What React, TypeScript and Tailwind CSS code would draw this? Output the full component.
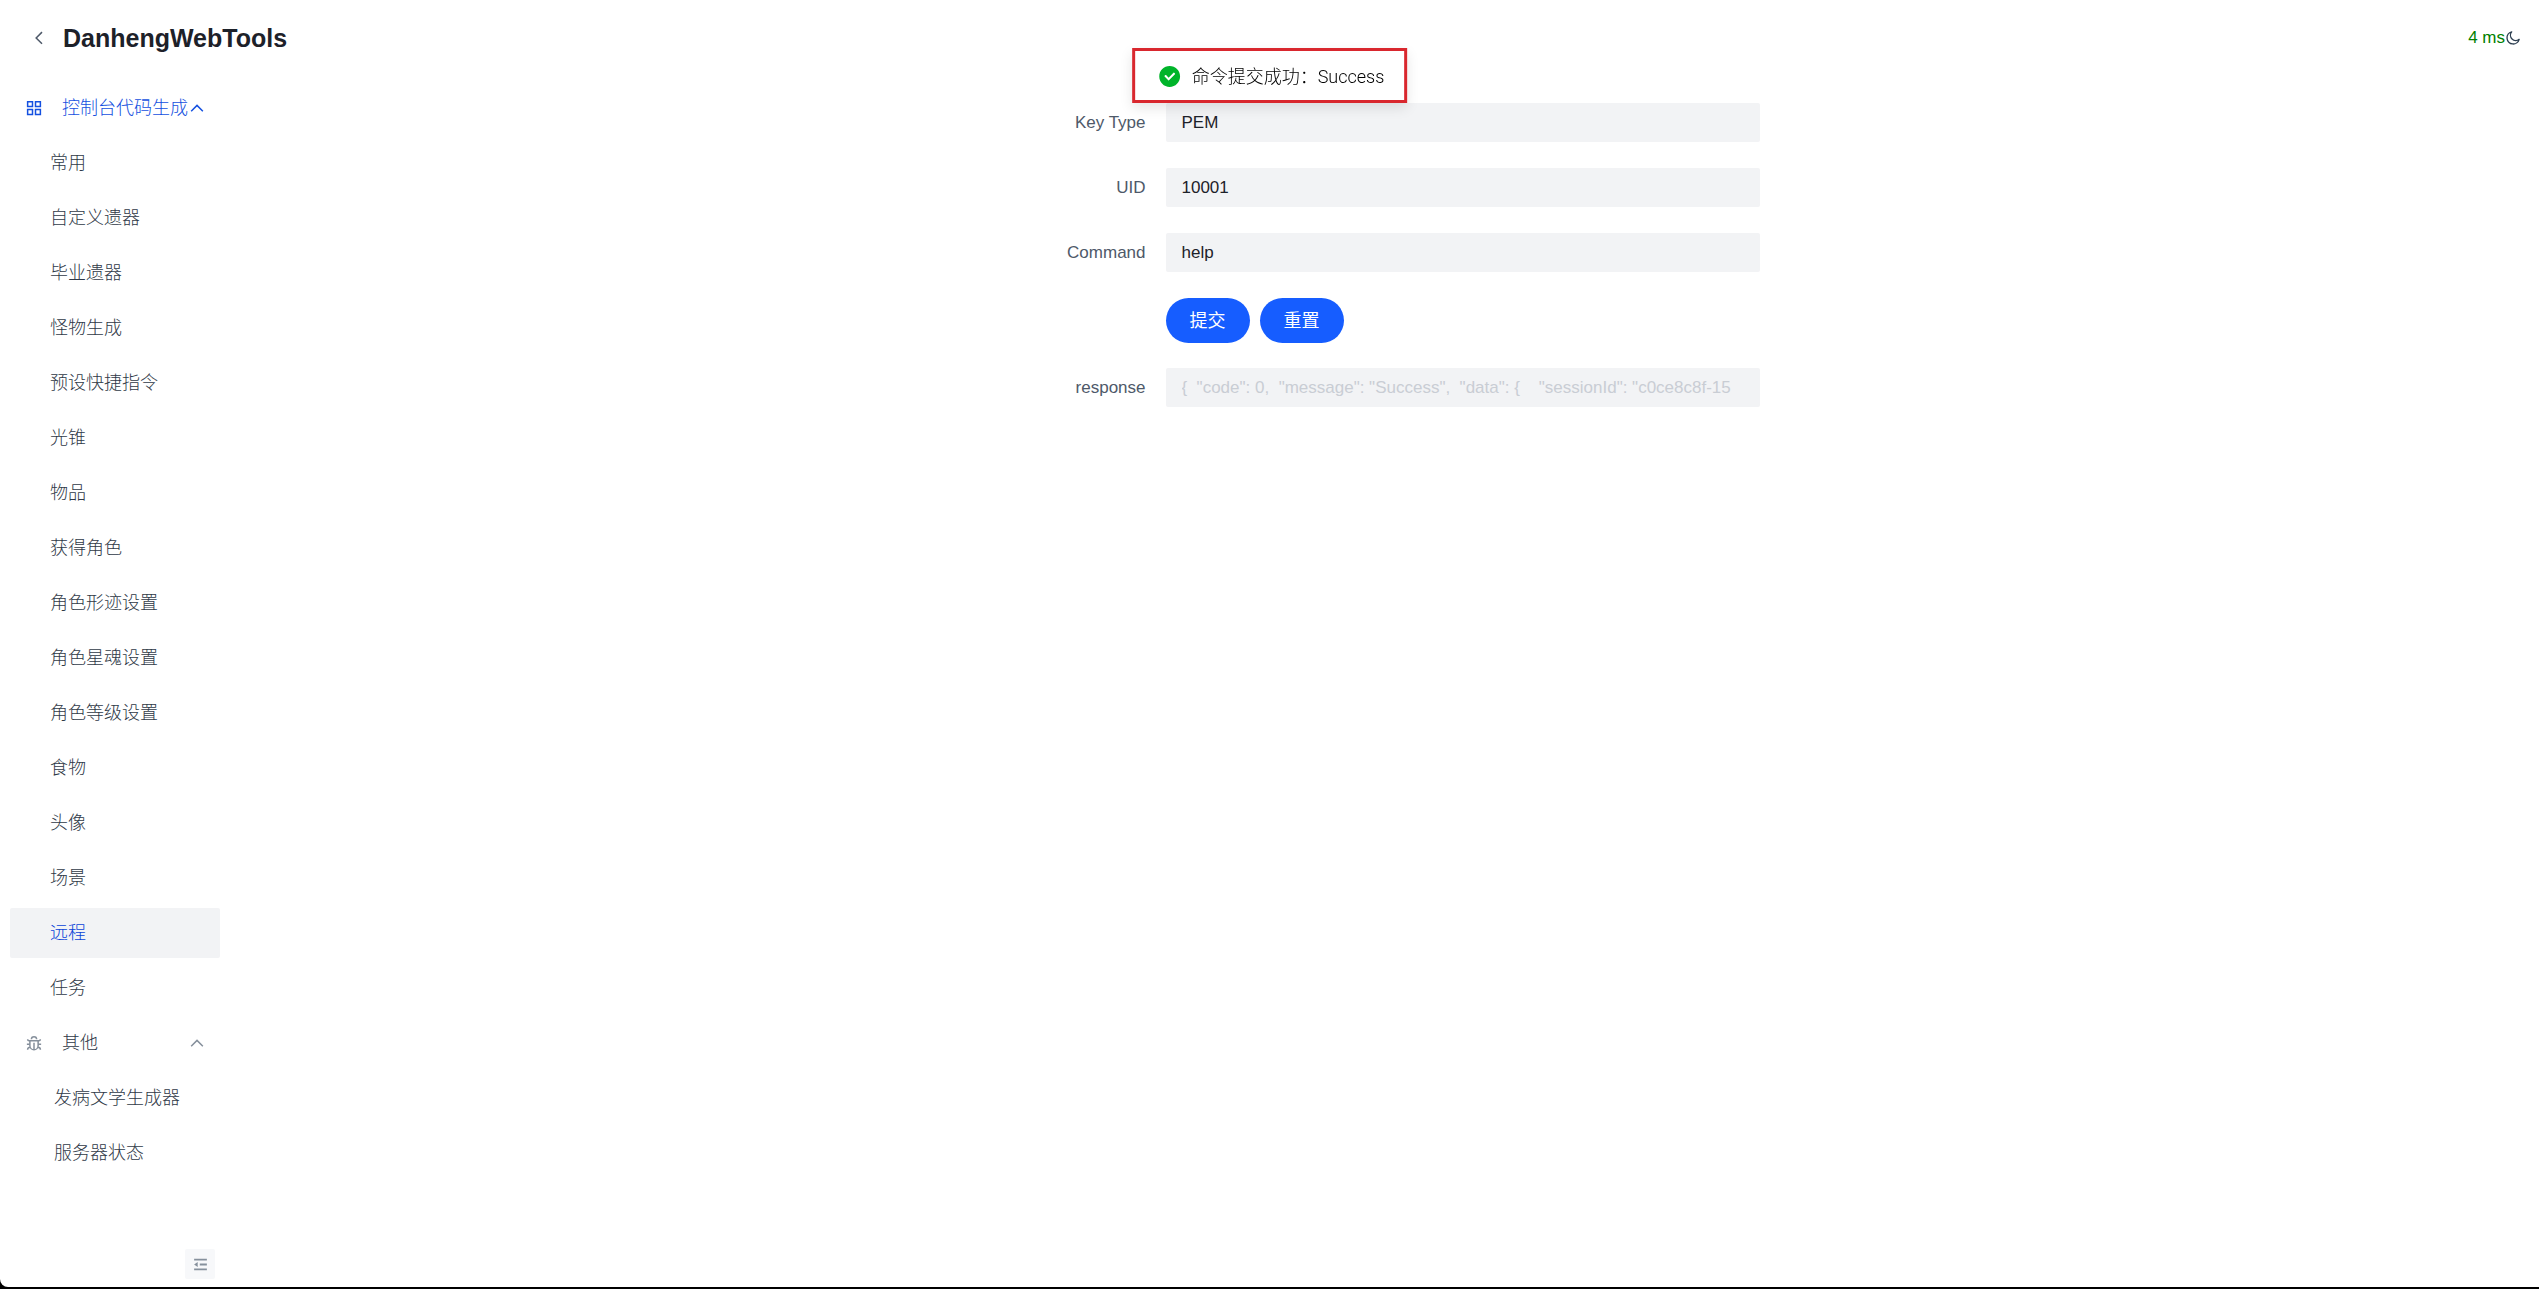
import React, { useState } from 'react';

const commandPages = [
  '常用',
  '自定义遗器',
  '毕业遗器',
  '怪物生成',
  '预设快捷指令',
  '光锥',
  '物品',
  '获得角色',
  '角色形迹设置',
  '角色星魂设置',
  '角色等级设置',
  '食物',
  '头像',
  '场景',
  '远程',
  '任务',
];

const otherPages = ['发病文学生成器', '服务器状态'];

const RESPONSE = '{  "code": 0,  "message": "Success",  "data": {    "sessionId": "c0ce8c8f-15';

const IconUp = () => (
  <svg className="size-[18px] shrink-0" viewBox="0 0 48 48" fill="none" stroke="currentColor" strokeWidth="4">
    <path d="M39.6 32.557 24.043 17 8.487 32.557" />
  </svg>
);

const IconLeft = () => (
  <svg className="size-[18px]" viewBox="0 0 48 48" fill="none" stroke="currentColor" strokeWidth="4">
    <path d="M32 8.4 16.444 23.956 32 39.513" />
  </svg>
);

const IconApps = () => (
  <svg className="size-[18px]" viewBox="0 0 48 48" fill="none" stroke="currentColor" strokeWidth="4">
    <path d="M7 7h13v13H7zM28 7h13v13H28zM7 28h13v13H7zM28 28h13v13H28z" />
  </svg>
);

const IconBug = () => (
  <svg className="size-[18px]" viewBox="0 0 48 48" fill="none" stroke="currentColor" strokeWidth="4">
    <path d="M24 42c-6.075 0-11-4.925-11-11V18h22v13c0 6.075-4.925 11-11 11Zm0 0V23m11 4h8M5 27h8M7 14a4 4 0 0 0 4 4h26a4 4 0 0 0 4-4m0 28v-.5a6.5 6.5 0 0 0-6.5-6.5M7 42v-.5a6.5 6.5 0 0 1 6.5-6.5M17 14a7 7 0 1 1 14 0" />
  </svg>
);

const IconMenuFold = () => (
  <svg className="size-[17px]" viewBox="0 0 48 48" fill="none" stroke="currentColor" strokeWidth="5">
    <path d="M42 10H6M42 24H22M42 38H6" />
    <path d="M16 17v14l-10-7z" fill="currentColor" stroke="none" />
  </svg>
);

const IconMoon = () => (
  <svg className="size-4" viewBox="0 0 48 48" fill="none" stroke="currentColor" strokeWidth="4">
    <path d="M20 5.500A18.500 18.500 0 1 0 42.500 28A16 16 0 0 1 20 5.500Z" strokeLinejoin="round" />
  </svg>
);

const IconCheckCircle = () => (
  <svg className="size-[25px]" viewBox="0 0 48 48">
    <path
      fill="#00b42a"
      fillRule="evenodd"
      clipRule="evenodd"
      d="M24 44c11.046 0 20-8.954 20-20S35.046 4 24 4 4 12.954 4 24s8.954 20 20 20Zm10.207-24.379a1 1 0 0 0 0-1.414l-1.414-1.414a1 1 0 0 0-1.414 0L22 26.172l-4.878-4.88a1 1 0 0 0-1.415 0l-1.414 1.415a1 1 0 0 0 0 1.414l7 7a1 1 0 0 0 1.414 0l11.5-11.5Z"
    />
  </svg>
);

type MenuGroupProps = {
  icon: React.ReactNode;
  title: string;
  pages: string[];
  current: string;
  active?: boolean;
  indent: string;
  onSelect: (page: string) => void;
};

const MenuGroup: React.FC<MenuGroupProps> = ({ icon, title, pages, current, active, indent, onSelect }) => (
  <li>
    <button
      className={`flex h-[50px] w-full items-center rounded-xs pr-3.5 pl-[15px] text-left ${
        active ? 'text-[#1450e0]' : 'text-[#2f3947]'
      }`}
    >
      <span className={`mr-[19px] ${active ? '' : 'text-[#86909c]'}`}>{icon}</span>
      <span className="flex-1 whitespace-nowrap">{title}</span>
      <span className={active ? '' : 'text-[#86909c]'}>
        <IconUp />
      </span>
    </button>
    <ul className="mt-[5px] flex flex-col gap-[5px]">
      {pages.map((page) => (
        <li key={page}>
          <button
            onClick={() => onSelect(page)}
            className={`h-[50px] w-full rounded-xs text-left whitespace-nowrap ${indent} ${
              page === current ? 'bg-[#f2f3f5] text-[#0a44d8]' : 'text-[#2f3947]'
            }`}
          >
            {page}
          </button>
        </li>
      ))}
    </ul>
  </li>
);

const Field: React.FC<{ id: string; label: string; value: string; disabled?: boolean }> = ({
  id,
  label,
  value,
  disabled,
}) => (
  <div className="flex h-10 items-start">
    <label htmlFor={id} className="w-39 pr-5 text-right leading-10 text-[#4e5969]">
      {label}
    </label>
    <input
      id={id}
      type="text"
      defaultValue={value}
      disabled={disabled}
      className="h-[39px] min-w-0 flex-1 rounded-xs bg-[#f2f3f5] px-4 text-[#1d2129] disabled:text-[#c9cdd4]"
    />
  </div>
);

const App: React.FC = () => {
  const [current, setCurrent] = useState('远程');

  return (
    <div className="flex min-h-screen flex-col bg-black pb-0.5 font-['Liberation_Sans','Noto_Sans_CJK_SC',sans-serif] text-[17px] leading-6">
      <div className="flex flex-1 flex-col rounded-bl-lg bg-white">
        <header className="flex h-[77px] items-center justify-between pr-[18px] pb-0.5 pl-[30px]">
          <div className="flex items-center gap-[15px]">
            <button aria-label="返回" className="text-[#4e5969]">
              <IconLeft />
            </button>
            <h1 className="text-[25px] font-bold text-[#1d2129]">DanhengWebTools</h1>
          </div>
          <div className="flex items-center text-[#008000]">
            <span>4 ms</span>
            <button aria-label="深色模式" className="text-[#2c3e50]">
              <IconMoon />
            </button>
          </div>
        </header>

        <div className="flex flex-1">
          <aside className="flex w-[230px] flex-col justify-between px-2.5 pt-1.5 pb-2 text-lg font-light">
            <nav>
              <ul className="flex flex-col gap-[5px]">
                <MenuGroup
                  icon={<IconApps />}
                  title="控制台代码生成"
                  pages={commandPages}
                  current={current}
                  active
                  indent="pl-10"
                  onSelect={setCurrent}
                />
                <MenuGroup
                  icon={<IconBug />}
                  title="其他"
                  pages={otherPages}
                  current={current}
                  indent="pl-11"
                  onSelect={setCurrent}
                />
              </ul>
            </nav>
            <button
              aria-label="收起菜单"
              className="mr-[5px] flex size-[30px] items-center justify-center self-end rounded-xs bg-[#f7f8fa] text-[#86909c]"
            >
              <IconMenuFold />
            </button>
          </aside>

          <main className="flex-1 pt-[26px]">
            <form className="mx-auto flex max-w-[750px] flex-col gap-[25px]" onSubmit={(e) => e.preventDefault()}>
              <Field id="key-type" label="Key Type" value="PEM" />
              <Field id="uid" label="UID" value="10001" />
              <Field id="command" label="Command" value="help" />
              <div className="flex gap-2.5 pl-39 text-lg text-white">
                <button type="submit" className="h-[45px] rounded-full bg-[#165dff] px-6">
                  提交
                </button>
                <button type="reset" className="h-[45px] rounded-full bg-[#165dff] px-6">
                  重置
                </button>
              </div>
              <Field id="response" label="response" value={RESPONSE} disabled />
            </form>
          </main>
        </div>
      </div>

      {/* Message */}
      <div
        role="status"
        className="fixed top-12 left-1/2 flex h-[55px] -translate-x-1/2 items-center gap-2.5 border-[3px] border-[#d9272e] bg-white pt-0.5 pr-5 pl-[22px] text-lg font-light whitespace-nowrap text-black shadow-[0_5px_12px_rgba(0,0,0,0.1)]"
      >
        <IconCheckCircle />
        <span className="font-['Roboto','Noto_Sans_CJK_SC',sans-serif]">命令提交成功：Success</span>
      </div>
    </div>
  );
};

export default App;
